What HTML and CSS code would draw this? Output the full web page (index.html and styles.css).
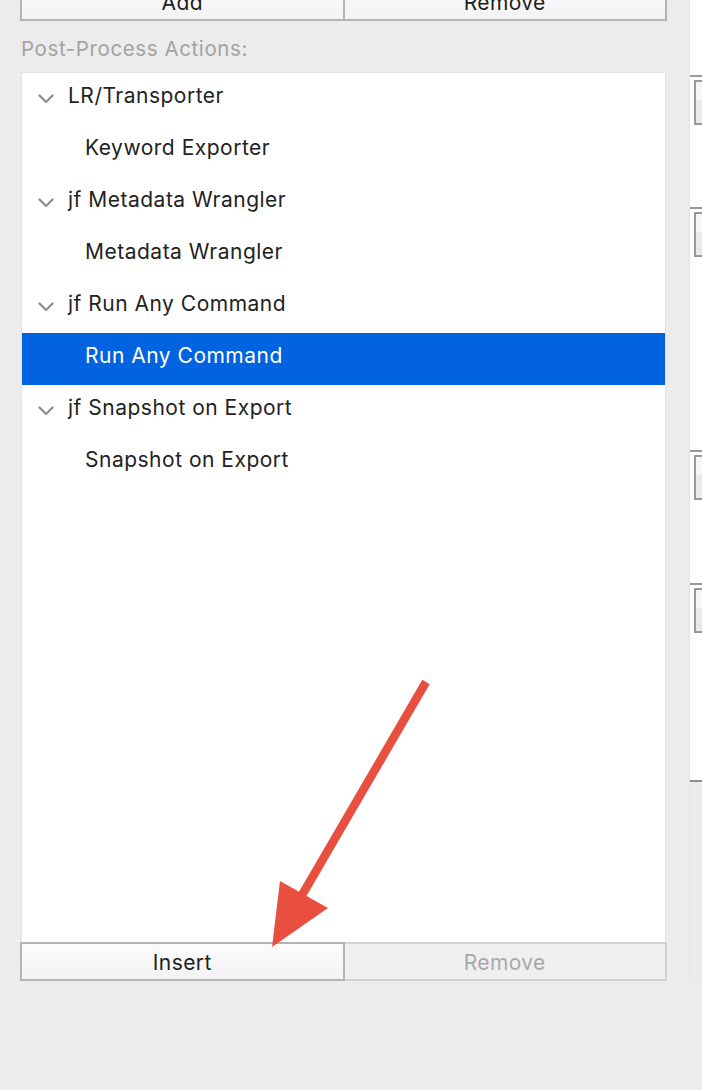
FILE: index.html
```html
<!DOCTYPE html>
<html>
<head>
<meta charset="utf-8">
<link rel="stylesheet" href="styles.css">
</head>
<body>
<div class="page">
  <div class="main">
    <div class="btn-row top-row">
      <div class="btn">Add</div>
      <div class="btn">Remove</div>
    </div>
    <div class="label">Post-Process Actions:</div>
    <div class="list">
      <div class="row group"><svg class="chev" width="16" height="10" viewBox="0 0 16 10"><path d="M1.5 1.5 L8 8 L14.5 1.5" fill="none" stroke="#8c8c8c" stroke-width="2.2" stroke-linecap="round" stroke-linejoin="round"/></svg><span>LR/Transporter</span></div>
      <div class="row child">Keyword Exporter</div>
      <div class="row group"><svg class="chev" width="16" height="10" viewBox="0 0 16 10"><path d="M1.5 1.5 L8 8 L14.5 1.5" fill="none" stroke="#8c8c8c" stroke-width="2.2" stroke-linecap="round" stroke-linejoin="round"/></svg><span>jf Metadata Wrangler</span></div>
      <div class="row child">Metadata Wrangler</div>
      <div class="row group"><svg class="chev" width="16" height="10" viewBox="0 0 16 10"><path d="M1.5 1.5 L8 8 L14.5 1.5" fill="none" stroke="#8c8c8c" stroke-width="2.2" stroke-linecap="round" stroke-linejoin="round"/></svg><span>jf Run Any Command</span></div>
      <div class="row child selected">Run Any Command</div>
      <div class="row group"><svg class="chev" width="16" height="10" viewBox="0 0 16 10"><path d="M1.5 1.5 L8 8 L14.5 1.5" fill="none" stroke="#8c8c8c" stroke-width="2.2" stroke-linecap="round" stroke-linejoin="round"/></svg><span>jf Snapshot on Export</span></div>
      <div class="row child">Snapshot on Export</div>
    </div>
    <div class="btn-row bottom-row">
      <div class="btn">Insert</div>
      <div class="btn disabled">Remove</div>
    </div>
  </div>
  <div class="side">
    <div class="side-top"></div>
    <div class="side-sec s1"><div class="side-box"></div></div>
    <div class="side-sec s2"><div class="side-box"></div></div>
    <div class="side-sec s3"><div class="side-box"></div></div>
    <div class="side-sec s4"><div class="side-box"></div></div>
    <div class="side-panel"></div>
  </div>
</div>
<svg class="arrow" width="702" height="1090" viewBox="0 0 702 1090">
  <line x1="426" y1="682" x2="298" y2="902" stroke="#e94f3e" stroke-width="8.5"/>
  <polygon points="280,881 328,908 272,947" fill="#e94f3e"/>
</svg>
</body>
</html>
```
FILE: styles.css
```css
html, body {
  margin: 0;
  padding: 0;
  background: #ececec;
  height: 1090px;
  overflow: hidden;
}
body {
  font-family: Inter, "Noto Sans", sans-serif;
  color: #222;
  position: relative;
}
.page {
  display: flex;
  align-items: flex-start;
}
.main {
  margin-left: 20px;
  width: 647px;
  display: flex;
  flex-direction: column;
}
.btn-row {
  display: flex;
  height: 39px;
  box-sizing: border-box;
}
.top-row {
  margin-top: -18px;
}
.btn {
  flex: 1;
  box-sizing: border-box;
  border: 2px solid #b3b3b3;
  background: linear-gradient(#fbfbfb, #f3f3f3);
  display: flex;
  align-items: center;
  justify-content: center;
  padding-top: 2px;
  font-size: 21px;
  letter-spacing: 0.4px;
  color: #1e1e1e;
}
.btn + .btn {
  border-left: none;
}
.btn.disabled {
  background: #efefef;
  border-color: #d2d2d2;
  color: #a9a9a9;
}
.label {
  height: 51px;
  box-sizing: border-box;
  padding-top: 16px;
  padding-left: 1px;
  font-size: 20.5px;
  letter-spacing: 0.6px;
  line-height: 24px;
  color: #a3a3a3;
  white-space: nowrap;
}
.list {
  margin-left: 1px;
  width: 645px;
  height: 870px;
  box-sizing: border-box;
  background: #fff;
  border: 1px solid #e2e2e2;
  border-bottom: none;
}
.row {
  height: 52px;
  line-height: 46px;
  font-size: 21px;
  letter-spacing: 0.5px;
  color: #222;
  display: flex;
  align-items: flex-start;
  white-space: nowrap;
}
.group {
  padding-left: 16px;
}
.chev {
  margin-top: 21px;
  margin-right: 14px;
  flex: none;
}
.child {
  padding-left: 63px;
}
.selected {
  background: #0163e0;
  color: #fff;
}
.bottom-row {
  margin-top: 0;
}
.side {
  margin-left: 22px;
  flex: 1;
  display: flex;
  flex-direction: column;
  border-left: 1px solid #e2e2e2;
}
.side-top {
  height: 75px;
  background: #fff;
}
.side-sec {
  background: #fff;
  border-top: 2px solid #999;
  box-sizing: border-box;
  padding-top: 3px;
  padding-left: 4px;
}
.s1 { height: 132px; }
.s2 { height: 243px; }
.s3 { height: 133px; }
.s4 { height: 197px; }
.side-box {
  height: 45px;
  box-sizing: border-box;
  border: 2px solid #999;
  border-right: none;
  background: linear-gradient(#f6f6f6 0, #f6f6f6 45%, #e9e9e9 45%, #e9e9e9 100%);
}
.side-panel {
  height: 203px;
  box-sizing: border-box;
  border-top: 2px solid #8e8e8e;
  border-bottom: 1px solid #e3e3e3;
  background: #ebebeb;
}
.arrow {
  position: absolute;
  left: 0;
  top: 0;
  pointer-events: none;
}
```
